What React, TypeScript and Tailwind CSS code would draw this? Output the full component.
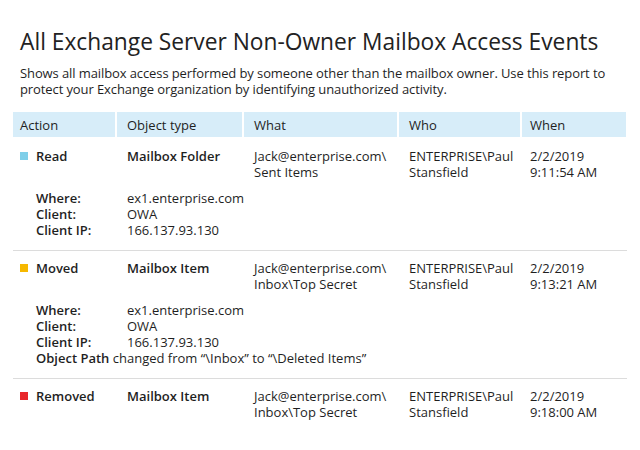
import React from 'react';

type Detail = { label: string; value: string };

interface EventRow {
  action: string;
  color: string;
  objectType: string;
  what: string[];
  who: string[];
  when: string[];
  details?: Detail[];
  extra?: React.ReactNode;
}

const cols = 'grid grid-cols-[102px_125px_153px_121px_104px] gap-x-[2px]';

const rows: EventRow[] = [
  {
    action: 'Read',
    color: 'bg-[#7fcfe9]',
    objectType: 'Mailbox Folder',
    what: ['Jack@enterprise.com\\', 'Sent Items'],
    who: ['ENTERPRISE\\Paul', 'Stansfield'],
    when: ['2/2/2019', '9:11:54 AM'],
    details: [
      { label: 'Where:', value: 'ex1.enterprise.com' },
      { label: 'Client:', value: 'OWA' },
      { label: 'Client IP:', value: '166.137.93.130' },
    ],
  },
  {
    action: 'Moved',
    color: 'bg-[#f6b800]',
    objectType: 'Mailbox Item',
    what: ['Jack@enterprise.com\\', 'Inbox\\Top Secret'],
    who: ['ENTERPRISE\\Paul', 'Stansfield'],
    when: ['2/2/2019', '9:13:21 AM'],
    details: [
      { label: 'Where:', value: 'ex1.enterprise.com' },
      { label: 'Client:', value: 'OWA' },
      { label: 'Client IP:', value: '166.137.93.130' },
    ],
    extra: (
      <>
        <span className="font-semibold">Object Path</span> changed from “\Inbox” to “\Deleted Items”
      </>
    ),
  },
  {
    action: 'Removed',
    color: 'bg-[#e8272b]',
    objectType: 'Mailbox Item',
    what: ['Jack@enterprise.com\\', 'Inbox\\Top Secret'],
    who: ['ENTERPRISE\\Paul', 'Stansfield'],
    when: ['2/2/2019', '9:18:00 AM'],
  },
];

function Lines({ items }: { items: string[] }) {
  return (
    <div className="flex flex-col">
      {items.map((t) => (
        <span key={t}>{t}</span>
      ))}
    </div>
  );
}

function EventBlock({ row, first, last }: { row: EventRow; first: boolean; last: boolean }) {
  return (
    <div
      className={`${first ? 'pt-[11px]' : 'pt-[9px]'} pb-[12px] ${
        last ? '' : 'border-b border-[#dcdcdc]'
      }`}
    >
      <div className={cols}>
        <div className="flex items-start pl-[7px]">
          <span className={`mt-[4px] h-[8px] w-[8px] shrink-0 ${row.color}`} />
          <span className="ml-[8px] font-semibold">{row.action}</span>
        </div>
        <div className="pl-[10px] font-semibold">{row.objectType}</div>
        <div className="pl-[10px]">
          <Lines items={row.what} />
        </div>
        <div className="pl-[10px]">
          <Lines items={row.who} />
        </div>
        <div className="pl-[8px]">
          <Lines items={row.when} />
        </div>
      </div>
      {row.details && (
        <div className="mt-[10px]">
          {row.details.map((d) => (
            <div key={d.label} className={cols}>
              <div className="pl-[23px] font-semibold">{d.label}</div>
              <div className="col-span-2 pl-[10px]">{d.value}</div>
            </div>
          ))}
          {row.extra && <div className="pl-[23px]">{row.extra}</div>}
        </div>
      )}
    </div>
  );
}

export default function App() {
  return (
    <div className="h-[450px] w-[640px] bg-white font-['Open_Sans',sans-serif] text-[#1f1f1f]">
      <div className="px-[20px] pt-[26px]">
        <h1 className="text-[22.75px] leading-[32px] text-[#222]">
          All Exchange Server Non-Owner Mailbox Access Events
        </h1>
        <p className="mt-[7px] text-[13px] leading-[16px] tracking-[-0.1px]">
          Shows all mailbox access performed by someone other than the mailbox owner. Use this report to
          protect your Exchange organization by identifying unauthorized activity.
        </p>
      </div>
      <div className="mx-[13px] mt-[15px] text-[13px] leading-[16px]">
        <div className={cols}>
          {['Action', 'Object type', 'What', 'Who', 'When'].map((h, i) => (
            <div
              key={h}
              className={`flex h-[25px] items-center bg-[#d7edf9] font-medium ${
                i === 0 ? 'pl-[7px]' : i === 4 ? 'pl-[8px]' : 'pl-[10px]'
              }`}
            >
              {h}
            </div>
          ))}
        </div>
        <div>
          {rows.map((r, i) => (
            <EventBlock key={r.action} row={r} first={i === 0} last={i === rows.length - 1} />
          ))}
        </div>
      </div>
    </div>
  );
}
